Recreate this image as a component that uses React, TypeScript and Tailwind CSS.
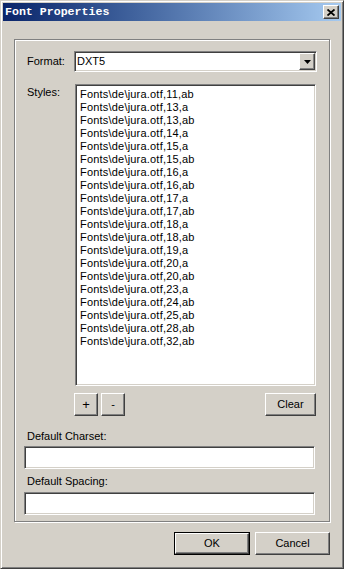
// @ts-nocheck
const items = [
  "11,ab", "13,a", "13,ab", "14,a", "15,a", "15,ab", "16,a", "16,ab", "17,a", "17,ab",
  "18,a", "18,ab", "19,a", "20,a", "20,ab", "23,a", "24,ab", "25,ab", "28,ab", "32,ab",
];

const raised =
  "border border-t-white border-l-white border-r-[#404040] border-b-[#404040] shadow-[inset_-1px_-1px_0_#808080] bg-[#d4d0c8]";
const sunken =
  "border border-t-[#808080] border-l-[#808080] border-r-white border-b-white shadow-[inset_1px_1px_0_#404040,inset_-1px_-1px_0_#d4d0c8] bg-white";

function Btn({ className = "", children }) {
  return (
    <div className={`${raised} flex items-center justify-center text-[11px] leading-none text-black ${className}`}>
      {children}
    </div>
  );
}

export default function App() {
  return (
    <div
      className="w-[344px] h-[569px] bg-[#d4d0c8] border border-t-[#d4d0c8] border-l-[#d4d0c8] border-r-[#404040] border-b-[#404040] shadow-[inset_1px_1px_0_#fff,inset_-1px_-1px_0_#808080] p-[2px] flex flex-col"
      style={{ fontFamily: '"Liberation Sans", Arial, sans-serif' }}
    >
      {/* title bar */}
      <div className="h-[18px] flex items-center justify-between pl-[2px] pr-[2px] bg-gradient-to-r from-[#0a246a] to-[#a6caf0]">
        <span className="text-white font-bold text-[11.6px] leading-none" style={{ fontFamily: '"Liberation Mono", monospace' }}>
          Font Properties
        </span>
        <div className={`${raised} w-[16px] h-[14px] flex items-center justify-center`}>
          <svg width="8" height="7" viewBox="0 0 8 7">
            <path d="M0.5 0.5 L7.5 6.5 M7.5 0.5 L0.5 6.5" stroke="#000" strokeWidth="1.8" />
          </svg>
        </div>
      </div>

      {/* group box */}
      <div className="ml-[11px] mt-[18px] w-[316px] h-[483px] border border-[#808080] shadow-[inset_1px_1px_0_#fff,1px_1px_0_#fff] flex flex-col">
        <div className="mt-[11px] flex items-center h-[21px]">
          <span className="pl-[12px] w-[59px] text-[11px] leading-[13px] text-black">Format:</span>
          <div className={`${sunken} w-[243px] h-[21px] flex items-center justify-between`}>
            <span className="pl-[2px] text-[11px] leading-[13px] text-black">DXT5</span>
            <div className={`${raised} w-[16px] h-[17px] mr-[1px] flex items-center justify-center`}>
              <svg width="7" height="4" viewBox="0 0 7 4">
                <path d="M0 0 H7 L3.5 4 Z" fill="#000" />
              </svg>
            </div>
          </div>
        </div>

        <div className="mt-[12px] flex">
          <span className="pl-[12px] w-[60px] pt-[2px] text-[11px] leading-[13px] text-black">Styles:</span>
          <div className={`${sunken} w-[241px] h-[302px] pt-[3px] pl-[4px] flex flex-col`}>
            {items.map((s) => (
              <span key={s} className="text-[11px] leading-[13px] tracking-[0.2px] text-black whitespace-nowrap">
                Fonts\de\jura.otf,{s}
              </span>
            ))}
          </div>
        </div>

        <div className="mt-[7px] flex h-[23px] pl-[59px]">
          <Btn className="w-[24px] h-[23px] text-[13px]">+</Btn>
          <Btn className="ml-[3px] w-[24px] h-[23px]">-</Btn>
          <Btn className="ml-auto mr-[13px] w-[51px] h-[23px]">Clear</Btn>
        </div>

        <div className="pl-[9px] flex flex-col">
          <span className="mt-[14px] pl-[3px] text-[11px] leading-[13px] text-black">Default Charset:</span>
          <div className={`${sunken} mt-[3px] w-[291px] h-[23px]`}></div>
          <span className="mt-[6px] pl-[3px] text-[11px] leading-[13px] text-black">Default Spacing:</span>
          <div className={`${sunken} mt-[4px] w-[291px] h-[23px]`}></div>
        </div>
      </div>

      {/* dialog buttons */}
      <div className="mt-[10px] flex pl-[171px]">
        <div className="border border-black">
          <Btn className="w-[74px] h-[21px]">OK</Btn>
        </div>
        <Btn className="ml-[5px] w-[75px] h-[23px]">Cancel</Btn>
      </div>
    </div>
  );
}
